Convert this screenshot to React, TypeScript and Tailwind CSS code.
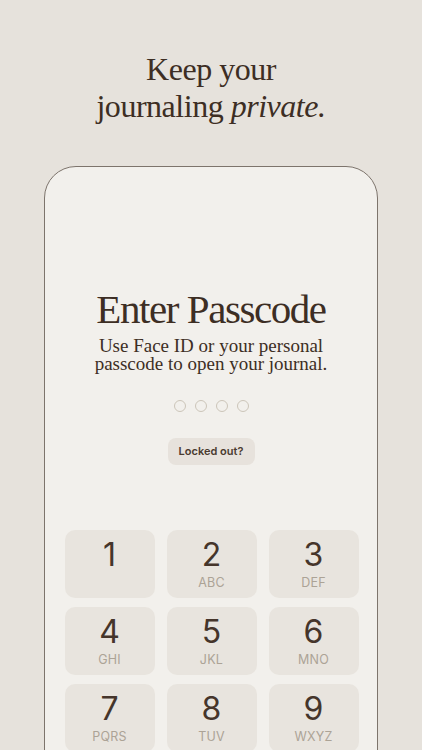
const keys: { digit: string; letters: string }[] = [
  { digit: '1', letters: '' },
  { digit: '2', letters: 'ABC' },
  { digit: '3', letters: 'DEF' },
  { digit: '4', letters: 'GHI' },
  { digit: '5', letters: 'JKL' },
  { digit: '6', letters: 'MNO' },
  { digit: '7', letters: 'PQRS' },
  { digit: '8', letters: 'TUV' },
  { digit: '9', letters: 'WXYZ' },
]

export default function App() {
  return (
    <div className="h-[750px] w-[422px] overflow-hidden bg-[#e6e2dc] flex flex-col items-center pt-[51px]">
      {/* Headline */}
      <h1 className="text-center font-['Liberation_Serif',serif] text-[32px] leading-[37px] tracking-[-0.015em] text-[#3d2e24]">
        Keep your
        <br />
        journaling <em className="italic">private.</em>
      </h1>

      {/* Phone card */}
      <div className="mt-[41px] w-[334px] h-[640px] shrink-0 rounded-[32px] border border-[#7d746c] bg-[#f2f0ec] flex flex-col items-center pt-[120px]">
        <h2 className="font-['Liberation_Serif',serif] text-[41px] leading-[44px] tracking-[-0.035em] text-[#3d2e24]">
          Enter Passcode
        </h2>
        <p className="mt-[6px] text-center font-['Liberation_Serif',serif] text-[19px] leading-[18px] text-[#3d2e24]">
          Use Face ID or your personal
          <br />
          passcode to open your journal.
        </p>

        {/* Passcode dots */}
        <div className="mt-[27px] flex gap-[9px]">
          {[0, 1, 2, 3].map(i => (
            <span key={i} className="w-[12px] h-[12px] rounded-full border-[1.5px] border-[#ccc5b9]" />
          ))}
        </div>

        <button className="mt-[26px] h-[27px] w-[87px] rounded-[8px] bg-[#e7e2dc] font-['Inter',sans-serif] text-[11px] font-semibold text-[#4a3b30]">
          Locked out?
        </button>

        {/* Keypad */}
        <div className="mt-[65px] ml-[1px] grid grid-cols-[90px_90px_90px] gap-x-[12px] gap-y-[9px]">
          {keys.map(k => (
            <div key={k.digit} className="h-[68px] rounded-[10px] bg-[#e8e4de] flex flex-col items-center pt-[7px]">
              <span className="font-['Inter',sans-serif] text-[32px] leading-[36px] font-normal text-[#45352b]">
                {k.digit}
              </span>
              {k.letters && (
                <span className="mt-[3px] font-['Inter',sans-serif] text-[12.5px] leading-[14px] tracking-[0.02em] text-[#aca396]">
                  {k.letters}
                </span>
              )}
            </div>
          ))}
        </div>
      </div>
    </div>
  )
}
